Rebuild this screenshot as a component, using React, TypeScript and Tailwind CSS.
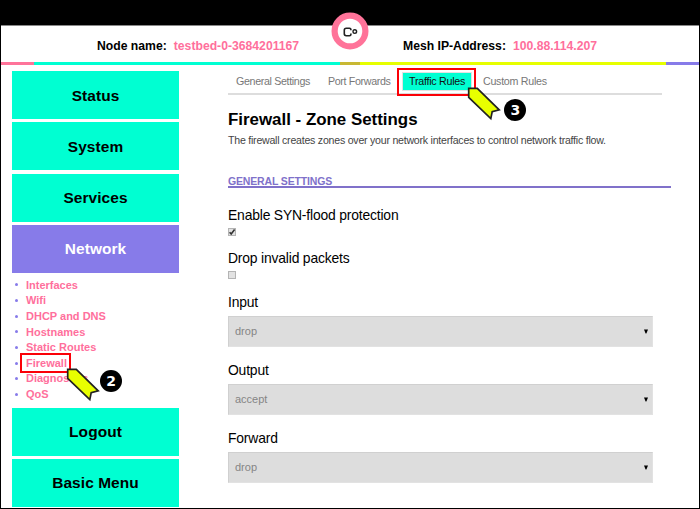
import React from 'react';

const links = ['Interfaces', 'Wifi', 'DHCP and DNS', 'Hostnames', 'Static Routes', 'Firewall', 'Diagnostics', 'QoS'];

function MenuButton({ label, active = false }: { label: string; active?: boolean }) {
  return (
    <div
      className={
        'flex h-[48px] w-[167px] shrink-0 items-center justify-center text-[15.45px] font-bold tracking-[0.08px] ' +
        (active ? 'bg-[#877be9] text-white' : 'bg-[#00ffd2] text-black')
      }
    >
      {label}
    </div>
  );
}

function Field({ label, children }: { label: string; children: React.ReactNode }) {
  return (
    <div>
      <div className="h-[20px] text-[13.9px] leading-[20px] tracking-[-0.18px] text-black">{label}</div>
      {children}
    </div>
  );
}

function Checkbox({ checked = false }: { checked?: boolean }) {
  return (
    <div className="mt-[3px] flex size-[8px] items-center justify-center border border-[#b4b4b4] bg-[#e2e2e2]">
      {checked && (
        <svg viewBox="0 0 8 8" className="size-[8px] shrink-0">
          <path d="M1.6 4.2 L3.2 6 L6.6 1.6" fill="none" stroke="#333" strokeWidth="1.6" />
        </svg>
      )}
    </div>
  );
}

function Select({ value }: { value: string }) {
  return (
    <div className="mt-[4px] flex h-[31px] w-[425px] items-center justify-between border border-[#d0d0d0] border-r-[#e2e2e2] border-b-[#e2e2e2] bg-[#dddddd] pr-[4.5px] pl-[6px] text-[11px] text-[#858585]">
      <span>{value}</span>
      <svg viewBox="0 0 4 5" className="h-[5px] w-[4px]">
        <path d="M0 0.5 H4 L2.4 4.5 H1.6 Z" fill="#000" />
      </svg>
    </div>
  );
}

function Pointer() {
  return (
    <svg viewBox="0 0 34 34" className="h-[34px] w-[34px]">
      <path
        d="M1.7 1.3 H10.3 L32.2 22.8 L25.2 24.6 L23.8 31.6 L1.7 10.3 Z"
        fill="#e8ff00"
        stroke="#222"
        strokeWidth="1.7"
      />
    </svg>
  );
}

function StepBadge({ n }: { n: number }) {
  return (
    <div className="flex size-[22px] items-center justify-center rounded-full bg-black font-['DejaVu_Sans',sans-serif] text-[14px] leading-none font-bold text-white">
      {n}
    </div>
  );
}

export default function App() {
  return (
    <div className="relative flex h-[509px] w-[700px] flex-col overflow-hidden bg-white font-['Liberation_Sans',Arial,sans-serif]">
      <div className="h-[25px] shrink-0 bg-black" />
      <header className="flex h-[37px] shrink-0 border-t border-[#888] pt-[11px] pl-[97px] text-[12.2px] leading-[18px] font-bold whitespace-nowrap">
        <div className="w-[306px]">
          Node name:<span className="ml-[7px] text-[#ff6f9c]">testbed-0-3684201167</span>
        </div>
        <div>
          Mesh IP-Address:<span className="ml-[7px] text-[#ff6f9c]">100.88.114.207</span>
        </div>
      </header>
      <div className="flex h-[3px] shrink-0">
        <div className="w-[34px] bg-[#ff7399]" />
        <div className="w-[305.5px] bg-[#00ffd2]" />
        <div className="w-[20.5px] bg-[#c8b833]" />
        <div className="w-[305.5px] bg-[#e6ff00]" />
        <div className="flex-1 bg-[#877be9]" />
      </div>
      <div className="flex flex-1">
        <aside className="ml-[12px] flex w-[216px] flex-col pt-[6.4px]">
          <div className="flex flex-col gap-[3.1px]">
            <MenuButton label="Status" />
            <MenuButton label="System" />
            <MenuButton label="Services" />
            <MenuButton label="Network" active />
          </div>
          <ul className="h-[135.3px] shrink-0 pt-[4.4px]">
            {links.map((l) => (
              <li key={l} className="flex h-[15.65px] items-center text-[11px] font-bold text-[#ff6f9c]">
                <span className="mr-[8px] ml-[3px] size-[3px] rounded-full bg-[#877be9]" />
                {l}
              </li>
            ))}
          </ul>
          <div className="flex flex-col gap-[3px]">
            <MenuButton label="Logout" />
            <MenuButton label="Basic Menu" />
          </div>
        </aside>
        <main className="w-[443px]">
          <nav className="flex h-[30px] w-[434px] items-start border-b-2 border-[#dddddd] pt-[7px] pl-[8px] text-[10.7px] leading-[19px] tracking-[-0.35px] whitespace-nowrap text-[#777]">
            <span className="w-[92px]">General Settings</span>
            <span className="w-[74px]">Port Forwards</span>
            <span className="mr-[11px] h-[19px] w-[70px] border border-[#e2e2e2] bg-[#00ffd2] pl-[6px] leading-[17px] tracking-[-0.25px] text-[#111]">Traffic Rules</span>
            <span className="tracking-[-0.28px]">Custom Rules</span>
          </nav>
          <h1 className="mt-[13px] h-[24px] text-[16.9px] leading-[24px] font-bold text-black">Firewall - Zone Settings</h1>
          <p className="h-[17px] text-[10.6px] leading-[16px] tracking-[-0.235px] whitespace-nowrap text-[#444]">
            The firewall creates zones over your network interfaces to control network traffic flow.
          </p>
          <h2 className="mt-[25px] h-[14px] border-b-2 border-[#8071ca] text-[10.5px] leading-[14px] font-bold tracking-[-0.16px] text-[#8071ca]">
            GENERAL SETTINGS
          </h2>
          <div className="mt-[17px] flex flex-col">
            <div className="h-[43.3px]">
              <Field label="Enable SYN-flood protection"><Checkbox checked /></Field>
            </div>
            <div className="h-[43.7px]">
              <Field label="Drop invalid packets"><Checkbox /></Field>
            </div>
            <div className="h-[68px]"><Field label="Input"><Select value="drop" /></Field></div>
            <div className="h-[68px]"><Field label="Output"><Select value="accept" /></Field></div>
            <div className="h-[56px]"><Field label="Forward"><Select value="drop" /></Field></div>
          </div>
        </main>
      </div>

      <svg viewBox="0 0 38 38" className="absolute top-[11.7px] left-[330.8px] size-[38px]">
        <circle cx="19" cy="19" r="15.4" fill="#fff" stroke="#ff7399" strokeWidth="6.2" />
        <path d="M19.9 18.2 V17.4 Q19.9 16.3 18.5 16.3 H15.2 Q13.3 16.3 13.3 18.2 V21.8 Q13.3 23.7 15.2 23.7 H18.5 Q19.9 23.7 19.9 22.6 V21.6" fill="none" stroke="#222" strokeWidth="1.6" />
        <circle cx="23.8" cy="19.6" r="1.8" fill="none" stroke="#222" strokeWidth="1.4" />
      </svg>

      <div className="absolute top-[353px] left-[20px] h-[20px] w-[51px] border-2 border-[#fb0007]" />
      <div className="absolute top-[368px] left-[66px]"><Pointer /></div>
      <div className="absolute top-[369.7px] left-[100px]"><StepBadge n={2} /></div>

      <div className="absolute top-[68px] left-[397px] h-[28px] w-[79px] border-2 border-[#fb0007]" />
      <div className="absolute top-[87px] left-[466.7px]"><Pointer /></div>
      <div className="absolute top-[99px] left-[504.3px]"><StepBadge n={3} /></div>

      <div className="pointer-events-none absolute inset-0 border-r-[1.5px] border-b border-l border-black" />
    </div>
  );
}
